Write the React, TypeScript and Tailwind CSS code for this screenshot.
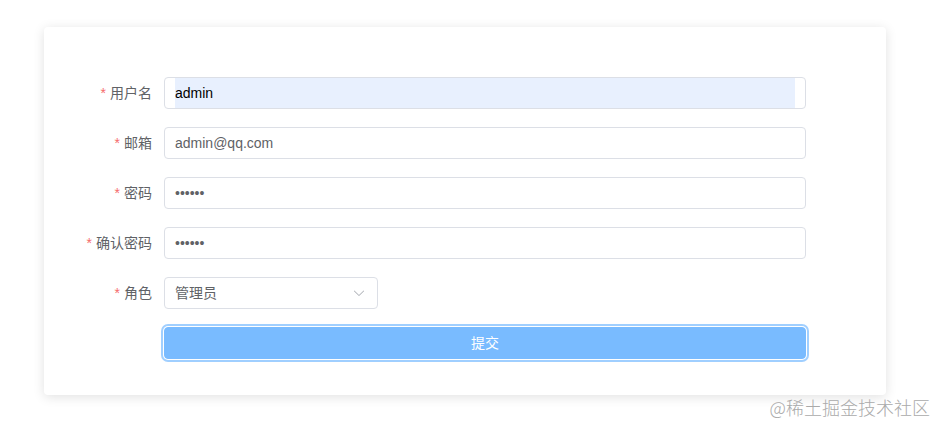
import React from "react";

const font = { fontFamily: '"Liberation Sans", "Noto Sans CJK SC", sans-serif' };

function Label({ text }: { text: string }) {
  return (
    <div className="w-[120px] shrink-0 pr-3 flex justify-end items-center h-8 text-[14px] text-[#606266]">
      <span className="text-[#f56c6c] mr-1">*</span>
      <span>{text}</span>
    </div>
  );
}

function Row({ label, children }: { label: string; children: React.ReactNode }) {
  return (
    <div className="flex items-center mb-[18px]">
      <Label text={label} />
      {children}
    </div>
  );
}

function Box({ children, className = "" }: { children: React.ReactNode; className?: string }) {
  return (
    <div
      className={
        "h-8 border border-[#dcdfe6] rounded bg-white flex items-center px-[10px] text-[14px] text-[#606266] " +
        className
      }
    >
      {children}
    </div>
  );
}

export default function App() {
  return (
    <div className="relative w-[935px] h-[423px] bg-white overflow-hidden" style={font}>
      <div className="pt-[27px] pl-[44px]">
        <div className="w-[842px] bg-white rounded shadow-[0_2px_12px_0_rgba(0,0,0,0.12)] pt-[50px] pb-[36px]">
          <Row label="用户名">
            <Box className="w-[642px]">
              <div className="h-[30px] flex-1 bg-[#e8f0fe] flex items-center text-black">admin</div>
            </Box>
          </Row>
          <Row label="邮箱">
            <Box className="w-[642px]">admin@qq.com</Box>
          </Row>
          <Row label="密码">
            <Box className="w-[642px]">••••••</Box>
          </Row>
          <Row label="确认密码">
            <Box className="w-[642px]">••••••</Box>
          </Row>
          <Row label="角色">
            <Box className="w-[214px] justify-between">
              <span>管理员</span>
              <svg width="14" height="14" viewBox="0 0 1024 1024" className="mr-[1px]">
                <path
                  fill="#a8abb2"
                  d="M831.872 340.864 512 652.672 192.128 340.864a30.592 30.592 0 0 0-42.752 0 29.12 29.12 0 0 0 0 41.6L489.664 714.24a32 32 0 0 0 44.672 0l340.288-331.712a29.12 29.12 0 0 0 0-41.728 30.592 30.592 0 0 0-42.752 0z"
                />
              </svg>
            </Box>
          </Row>
          <div className="flex">
            <div className="w-[120px] shrink-0" />
            <button
              className="w-[642px] h-8 rounded bg-[#79bbff] border border-[#79bbff] text-white text-[14px] ring-2 ring-[#a0cfff] ring-offset-1 ring-offset-white"
              style={font}
            >
              提交
            </button>
          </div>
        </div>
      </div>
      <div
        className="absolute right-[5px] top-[396px] text-[18px] leading-[22px] text-[#aaaaaa]"
        style={{ fontFamily: '"Noto Sans CJK SC", sans-serif', fontWeight: 300 }}
      >
        @稀土掘金技术社区
      </div>
    </div>
  );
}
